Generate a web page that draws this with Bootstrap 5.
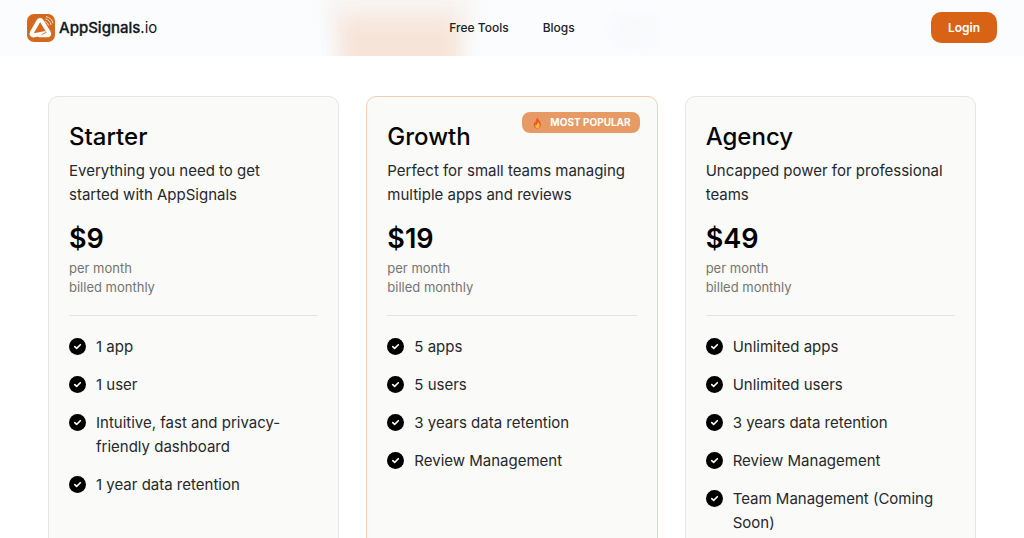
<!DOCTYPE html>
<html lang="en">
<head>
<meta charset="utf-8">
<meta name="viewport" content="width=device-width, initial-scale=1">
<title>AppSignals.io – Pricing</title>
<link href="https://cdn.jsdelivr.net/npm/bootstrap@5.3.0/dist/css/bootstrap.min.css" rel="stylesheet">
<style>
  body { font-family: Inter, "Liberation Sans", sans-serif; color: #26282b; background: #fff; }
  .site-header { min-height: 56px; background: #fafcfe; padding: 0 27px 1px; overflow: hidden; }
  .glow { position: absolute; z-index: -1; filter: blur(10px); }
  .glow-orange { left: 33%; top: 16px; width: 12%; height: 64px; background: #f6e4d9; }
  .glow-soft { left: 32%; top: -20px; width: 14%; height: 50px; background: #f8f5f3; }
  .glow-gray { left: 60%; top: 22px; width: 4%; height: 16px; background: #f5f7f9; }
  .brand { color: #15171a; font-size: 15px; line-height: 20px; gap: 4px; }
  .brand strong { font-weight: 500; -webkit-text-stroke: .3px; }
  .side { flex: 1 1 0; }
  .main-nav { gap: 34px; }
  .main-nav a { color: #202226; font-size: 12px; font-weight: 500; line-height: 16px; }
  .btn-login { --bs-btn-color: #fff; --bs-btn-bg: #d86316; --bs-btn-hover-color: #fff; --bs-btn-hover-bg: #bf5510;
    --bs-btn-border-width: 0; --bs-btn-border-radius: 10px; --bs-btn-padding-x: 17px; --bs-btn-padding-y: 7px;
    --bs-btn-font-size: 12px; --bs-btn-font-weight: 600; line-height: 17px; }
  .pricing { padding: 96px 48px 48px; }
  .plans { --bs-gutter-x: 27px; }
  .plan { --bs-card-bg: #fafaf8; --bs-card-border-color: #e6e6e5; --bs-card-border-radius: 10px;
    --bs-card-spacer-x: 20px; --bs-card-spacer-y: 24px; }
  .plan-featured { --bs-card-border-color: #f3ceb0; }
  .plan h2 { color: #050505; font-size: 24px; font-weight: 500; line-height: 32px; margin-bottom: 6px; }
  .plan p { font-size: 15px; line-height: 24px; margin-bottom: 16px; padding-right: 6px; }
  .price { color: #000; font-size: 27px; font-weight: 600; line-height: 32px; margin-bottom: 4px; }
  .terms { color: #737573; font-size: 13px; line-height: 19px; }
  .plan hr { margin: 18px 0 19px; border-color: #e4e4e2; opacity: 1; }
  .features { display: grid; gap: 14px; font-size: 15px; line-height: 24px; }
  .features li { display: flex; gap: 10px; }
  .features svg { flex: none; width: 17px; height: 17px; margin-top: 3px; }
  .popular { position: absolute; top: 15px; right: 17px; background: #e89a65; color: #fff; border-radius: 8px;
    padding: 0 9px; font-size: 10px; font-weight: 700; line-height: 21px; gap: 6px; }
</style>
</head>
<body>
<svg class="d-none" aria-hidden="true">
  <symbol id="check" viewBox="0 0 18 18">
    <circle cx="9" cy="9" r="9" fill="#000"/>
    <path d="M6.100 9.100l2 1.900 3.900-3.900" fill="none" stroke="#fff" stroke-width="1.7" stroke-linecap="round" stroke-linejoin="round"/>
  </symbol>
</svg>

<header class="site-header fixed-top d-flex align-items-center">
  <span class="glow glow-soft"></span><span class="glow glow-orange"></span><span class="glow glow-gray"></span>
  <div class="side d-flex">
    <a class="brand d-flex align-items-center text-decoration-none" href="#">
      <svg width="28" height="28" viewBox="0 0 28 28" aria-hidden="true">
        <rect width="28" height="28" rx="7" fill="#d3691f"/>
        <path d="M17.600 19.300L7.200 21.300C5 21.700 4 20.200 4.900 18.500L11.300 7.200C12.200 5.700 14 5.700 14.900 7.200L21.800 18.500C22.800 20.200 21.800 21.600 20 21.300H12.500" fill="none" stroke="#fff" stroke-width="4" stroke-linecap="round" stroke-linejoin="round"/>
        <path d="M14.800 20.600L19 18.500" stroke="#d3691f" stroke-width=".9" stroke-linecap="round"/>
        <path d="M18.400 7.700c1.700.5 2.600 1.800 2.900 3.500M18.800 5c2.800.7 4.600 2.500 5.100 5.500M19.300 2.700c3.300.6 5.800 2.800 6.600 6.200" fill="none" stroke="#fae3d2" stroke-width="1" stroke-linecap="round"/>
      </svg>
      <span><strong>AppSignals</strong>.io</span>
    </a>
  </div>
  <nav class="main-nav d-flex" aria-label="Main">
    <a class="text-decoration-none" href="#">Free Tools</a>
    <a class="text-decoration-none" href="#">Blogs</a>
  </nav>
  <div class="side d-flex justify-content-end"><button class="btn btn-login" type="button">Login</button></div>
</header>

<main class="pricing">
  <div class="row row-cols-1 row-cols-md-3 plans">
    <div class="col mb-4">
      <article class="card plan h-100"><div class="card-body pb-5">
        <h2>Starter</h2>
        <p>Everything you need to get started with AppSignals</p>
        <div class="price">$9</div>
        <div class="terms">per month<br>billed monthly</div>
        <hr>
        <ul class="features list-unstyled mb-0">
          <li><svg aria-hidden="true"><use href="#check"/></svg><span>1 app</span></li>
          <li><svg aria-hidden="true"><use href="#check"/></svg><span>1 user</span></li>
          <li><svg aria-hidden="true"><use href="#check"/></svg><span>Intuitive, fast and privacy-friendly dashboard</span></li>
          <li><svg aria-hidden="true"><use href="#check"/></svg><span>1 year data retention</span></li>
        </ul>
      </div></article>
    </div>
    <div class="col mb-4">
      <article class="card plan plan-featured h-100"><div class="card-body pb-5">
        <div class="popular d-flex align-items-center">
          <svg width="13" height="12" viewBox="0 0 13 12" aria-hidden="true">
            <path d="M6.200.5c.5 1.800 3.600 3.300 3.600 7 0 2.400-1.500 4-3.600 4S2.700 9.800 2.700 7.700c0-1.500.7-2.300 1.200-3.200.3.600.5.900.9 1.200C4.700 3.700 5 2 6.200.5z" fill="#e8592b"/>
            <path d="M7.400 5c.2 1.200 1.400 1.900 1.400 3.800 0 1.600-1 2.500-2.300 2.500S4.200 10.300 4.200 9c0-.8.4-1.300.8-1.700.3.500.6.700 1 .8C6 6.900 6.500 5.800 7.400 5z" fill="#f9b53c"/>
          </svg>
          <span>MOST POPULAR</span>
        </div>
        <h2>Growth</h2>
        <p>Perfect for small teams managing multiple apps and reviews</p>
        <div class="price">$19</div>
        <div class="terms">per month<br>billed monthly</div>
        <hr>
        <ul class="features list-unstyled mb-0">
          <li><svg aria-hidden="true"><use href="#check"/></svg><span>5 apps</span></li>
          <li><svg aria-hidden="true"><use href="#check"/></svg><span>5 users</span></li>
          <li><svg aria-hidden="true"><use href="#check"/></svg><span>3 years data retention</span></li>
          <li><svg aria-hidden="true"><use href="#check"/></svg><span>Review Management</span></li>
        </ul>
      </div></article>
    </div>
    <div class="col mb-4">
      <article class="card plan h-100"><div class="card-body pb-5">
        <h2>Agency</h2>
        <p>Uncapped power for professional teams</p>
        <div class="price">$49</div>
        <div class="terms">per month<br>billed monthly</div>
        <hr>
        <ul class="features list-unstyled mb-0">
          <li><svg aria-hidden="true"><use href="#check"/></svg><span>Unlimited apps</span></li>
          <li><svg aria-hidden="true"><use href="#check"/></svg><span>Unlimited users</span></li>
          <li><svg aria-hidden="true"><use href="#check"/></svg><span>3 years data retention</span></li>
          <li><svg aria-hidden="true"><use href="#check"/></svg><span>Review Management</span></li>
          <li><svg aria-hidden="true"><use href="#check"/></svg><span>Team Management (Coming Soon)</span></li>
        </ul>
      </div></article>
    </div>
  </div>
</main>
<script src="https://cdn.jsdelivr.net/npm/bootstrap@5.3.0/dist/js/bootstrap.bundle.min.js"></script>
</body>
</html>
